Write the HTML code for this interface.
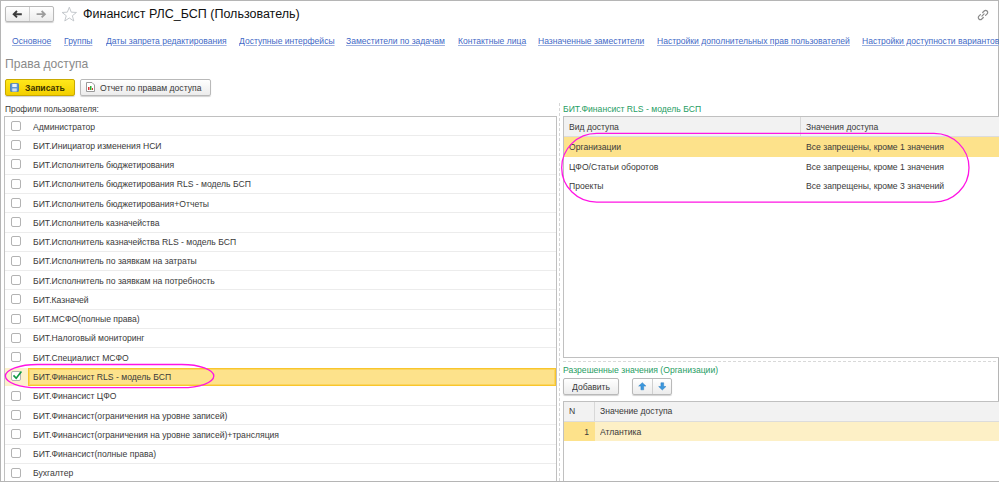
<!DOCTYPE html>
<html><head><meta charset="utf-8"><title>Финансист РЛС_БСП</title>
<style>
*{box-sizing:border-box;margin:0;padding:0}
html,body{width:999px;height:482px;overflow:hidden;background:#fff}
body{font-family:"Liberation Sans",sans-serif;font-size:9px;color:#3a3a3a;position:relative}
.abs{position:absolute;white-space:nowrap}
.t{position:absolute;white-space:nowrap;line-height:12px;height:12px;transform:scaleX(.9556);transform-origin:0 0}
.lnk{font-size:8.95px;color:#3f69c6;text-decoration:underline;text-decoration-color:#9fb1e0;text-underline-offset:1px}
.btn{position:absolute;border:1px solid #b9b9b9;border-radius:2px;background:linear-gradient(#ffffff,#ececec);box-shadow:0 1px 1px rgba(0,0,0,.18)}
.cb{position:absolute;left:11px;width:10px;height:10px;border:1px solid #b3b3b3;border-radius:2px;background:#fff}
.rl{position:absolute;left:5px;width:551px;height:1px;background:#ececec}
.g{color:#1f9d63}
</style></head><body>
<!-- outer frame -->
<div class="abs" style="left:0;top:0;width:999px;height:1px;background:#b5b5b5"></div>
<div class="abs" style="left:0;top:0;width:1px;height:482px;background:#b5b5b5"></div>
<div class="abs" style="left:998px;top:0;width:1px;height:482px;background:#b5b5b5"></div>
<div class="abs" style="left:0;top:481px;width:999px;height:1px;background:#b5b5b5;z-index:5"></div>

<div class="btn" style="left:5px;top:6px;width:49px;height:16px"></div>
<div class="abs" style="left:29px;top:7px;width:1px;height:14px;background:#d0d0d0"></div>
<svg class="abs" style="left:10px;top:8px" width="14" height="12" viewBox="0 0 14 12"><path d="M7 3 L3.7 6.2 L7 9.4 M4 6.2 H11.8" fill="none" stroke="#3c3c3c" stroke-width="1.9"/></svg>
<svg class="abs" style="left:34px;top:8px" width="14" height="12" viewBox="0 0 14 12"><path d="M7.6 3 L10.9 6.2 L7.6 9.4 M10.6 6.2 H2.6" fill="none" stroke="#9c9c9c" stroke-width="1.8"/></svg>
<svg class="abs" style="left:60.5px;top:5.8px" width="16.6" height="16.4" viewBox="0 0 16 16"><path d="M8 1.2 L9.9 6 L15 6.3 L11 9.5 L12.4 14.6 L8 11.7 L3.6 14.6 L5 9.5 L1 6.3 L6.1 6 Z" fill="#fff" stroke="#bfc3c8" stroke-width="0.9"/></svg>
<div class="t" style="left:83px;top:6px;font-size:13.08px;line-height:16px;height:16px;color:#111">Финансист РЛС_БСП (Пользователь)</div>
<svg class="abs" style="left:975.5px;top:7.5px" width="14" height="14" viewBox="0 0 13 13"><g fill="none" stroke="#8a8a8a" stroke-width="1.1" stroke-linecap="round"><path d="M5.5 7.5 L7.5 5.5"/><path d="M6.2 4.2 L7.6 2.8 a1.9 1.9 0 0 1 2.7 2.7 L8.9 6.9"/><path d="M6.8 8.8 L5.4 10.2 a1.9 1.9 0 0 1 -2.7 -2.7 L4.1 6.1"/></g></svg>

<div class="t lnk" style="left:11.5px;top:35px">Основное</div>
<div class="t lnk" style="left:63.5px;top:35px">Группы</div>
<div class="t lnk" style="left:105.5px;top:35px">Даты запрета редактирования</div>
<div class="t lnk" style="left:238.5px;top:35px">Доступные интерфейсы</div>
<div class="t lnk" style="left:345.5px;top:35px">Заместители по задачам</div>
<div class="t lnk" style="left:457.5px;top:35px">Контактные лица</div>
<div class="t lnk" style="left:537.5px;top:35px">Назначенные заместители</div>
<div class="t lnk" style="left:656.5px;top:35px">Настройки дополнительных прав пользователей</div>
<div class="t lnk" style="left:861.5px;top:35px">Настройки доступности вариантов</div>
<div class="t" style="left:5px;top:56px;font-size:12.66px;line-height:16px;height:16px;color:#8a8a8a">Права доступа</div>
<div class="btn" style="left:5px;top:79px;width:70px;height:17px;background:linear-gradient(#ffe81a,#f3cf00);border-color:#c9a900"></div>
<svg class="abs" style="left:10px;top:83px" width="9" height="9" viewBox="0 0 10 10"><rect x="0.5" y="0.5" width="9" height="9" rx="1" fill="#5b94d2" stroke="#4a7fbd"/><rect x="2.5" y="1" width="5" height="3.5" fill="#e8f0fa"/><rect x="2.5" y="6" width="5" height="3.5" fill="#cfdff2"/></svg>
<div class="t" style="left:25px;top:82px;font-weight:bold;color:#3b3300">Записать</div>
<div class="btn" style="left:80px;top:79px;width:131px;height:17px"></div>
<svg class="abs" style="left:86px;top:82px" width="9" height="10" viewBox="0 0 9 10"><path d="M0.5 0.5 H6 L8.5 3 V9.5 H0.5 Z" fill="#fff" stroke="#9a9a9a"/><rect x="2" y="5" width="1.5" height="3" fill="#d33"/><rect x="4" y="4" width="1.5" height="4" fill="#3a3"/><rect x="6" y="6" width="1" height="2" fill="#d33"/></svg>
<div class="t" style="left:100px;top:82px">Отчет по правам доступа</div>
<div class="t" style="left:5px;top:103px;font-size:8.74px">Профили пользователя:</div>

<div class="abs" style="left:4px;top:116px;width:553px;height:370px;border:1px solid #c0c0c0;background:#fff"></div>
<div class="cb" style="top:120.80px"></div>
<div class="t" style="left:33px;top:120.50px">Администратор</div>
<div class="rl" style="top:135.27px"></div>
<div class="cb" style="top:140.07px"></div>
<div class="t" style="left:33px;top:139.77px">БИТ.Инициатор изменения НСИ</div>
<div class="rl" style="top:154.54px"></div>
<div class="cb" style="top:159.34px"></div>
<div class="t" style="left:33px;top:159.04px">БИТ.Исполнитель бюджетирования</div>
<div class="rl" style="top:173.81px"></div>
<div class="cb" style="top:178.61px"></div>
<div class="t" style="left:33px;top:178.31px">БИТ.Исполнитель бюджетирования RLS - модель БСП</div>
<div class="rl" style="top:193.08px"></div>
<div class="cb" style="top:197.88px"></div>
<div class="t" style="left:33px;top:197.58px">БИТ.Исполнитель бюджетирования+Отчеты</div>
<div class="rl" style="top:212.35px"></div>
<div class="cb" style="top:217.15px"></div>
<div class="t" style="left:33px;top:216.85px">БИТ.Исполнитель казначейства</div>
<div class="rl" style="top:231.62px"></div>
<div class="cb" style="top:236.42px"></div>
<div class="t" style="left:33px;top:236.12px">БИТ.Исполнитель казначейства RLS - модель БСП</div>
<div class="rl" style="top:250.89px"></div>
<div class="cb" style="top:255.69px"></div>
<div class="t" style="left:33px;top:255.39px">БИТ.Исполнитель по заявкам на затраты</div>
<div class="rl" style="top:270.16px"></div>
<div class="cb" style="top:274.96px"></div>
<div class="t" style="left:33px;top:274.66px">БИТ.Исполнитель по заявкам на потребность</div>
<div class="rl" style="top:289.43px"></div>
<div class="cb" style="top:294.23px"></div>
<div class="t" style="left:33px;top:293.93px">БИТ.Казначей</div>
<div class="rl" style="top:308.70px"></div>
<div class="cb" style="top:313.50px"></div>
<div class="t" style="left:33px;top:313.20px">БИТ.МСФО(полные права)</div>
<div class="rl" style="top:327.97px"></div>
<div class="cb" style="top:332.77px"></div>
<div class="t" style="left:33px;top:332.47px">БИТ.Налоговый мониторинг</div>
<div class="rl" style="top:347.24px"></div>
<div class="cb" style="top:352.04px"></div>
<div class="t" style="left:33px;top:351.74px">БИТ.Специалист МСФО</div>
<div class="abs" style="left:5px;top:367.51px;width:23px;height:18.27px;background:#fdf1cb"></div>
<div class="abs" style="left:28px;top:367.51px;width:528px;height:18.27px;background:#fde28b;border:1px solid #f9c62c;box-shadow:inset 0 0 0 1px rgba(249,198,44,.45)"></div>
<div class="cb" style="top:371.31px"></div>
<svg class="abs" style="left:11px;top:369px" width="12" height="12" viewBox="0 0 12 12"><path d="M2.5 6.4 L5.2 9.3 L10.4 2.4" fill="none" stroke="#0f9a44" stroke-width="1.6"/></svg>
<div class="t" style="left:33px;top:371.01px">БИТ.Финансист RLS - модель БСП</div>
<div class="cb" style="top:390.58px"></div>
<div class="t" style="left:33px;top:390.28px">БИТ.Финансист ЦФО</div>
<div class="rl" style="top:405.05px"></div>
<div class="cb" style="top:409.85px"></div>
<div class="t" style="left:33px;top:409.55px">БИТ.Финансист(ограничения на уровне записей)</div>
<div class="rl" style="top:424.32px"></div>
<div class="cb" style="top:429.12px"></div>
<div class="t" style="left:33px;top:428.82px">БИТ.Финансист(ограничения на уровне записей)+трансляция</div>
<div class="rl" style="top:443.59px"></div>
<div class="cb" style="top:448.39px"></div>
<div class="t" style="left:33px;top:448.09px">БИТ.Финансист(полные права)</div>
<div class="rl" style="top:462.86px"></div>
<div class="cb" style="top:467.66px"></div>
<div class="t" style="left:33px;top:467.36px">Бухгалтер</div>
<div class="abs" style="left:559px;top:103px;width:1px;height:379px;background:repeating-linear-gradient(180deg,#d6d6d6 0,#d6d6d6 3px,transparent 3px,transparent 5px)"></div>
<div class="abs" style="left:563px;top:361px;width:435px;height:1px;background:repeating-linear-gradient(90deg,#d9d9d9 0,#d9d9d9 3px,transparent 3px,transparent 5px)"></div>
<div class="t g" style="left:563px;top:103px">БИТ.Финансист RLS - модель БСП</div>
<div class="abs" style="left:563px;top:116px;width:440px;height:242px;border:1px solid #c0c0c0;background:#fff"></div>
<div class="abs" style="left:564px;top:117px;width:435px;height:19.5px;background:#f2f2f2;border-bottom:1px solid #dcdcdc"></div>
<div class="abs" style="left:800px;top:117px;width:1px;height:19px;background:#d8d8d8"></div>
<div class="abs" style="left:564px;top:137px;width:435px;height:19.5px;background:#fde28b"></div>
<div class="t" style="left:569px;top:120.5px">Вид доступа</div>
<div class="t" style="left:806px;top:120.5px">Значения доступа</div>

<div class="t" style="left:569px;top:141.3px">Организации</div><div class="t" style="left:806px;top:141.3px">Все запрещены, кроме 1 значения</div>
<div class="t" style="left:569px;top:160.6px">ЦФО/Статьи оборотов</div><div class="t" style="left:806px;top:160.6px">Все запрещены, кроме 1 значения</div>
<div class="t" style="left:569px;top:179.9px">Проекты</div><div class="t" style="left:806px;top:179.9px">Все запрещены, кроме 3 значений</div>
<div class="t g" style="left:563px;top:364px">Разрешенные значения (Организации)</div>
<div class="btn" style="left:563px;top:378px;width:56px;height:17px"></div>
<div class="t" style="left:572px;top:381px">Добавить</div>
<div class="btn" style="left:632px;top:378px;width:40px;height:17px"></div>
<div class="abs" style="left:652px;top:379px;width:1px;height:15px;background:#cfcfcf"></div>
<svg class="abs" style="left:638px;top:382.3px" width="8.6" height="8.6" viewBox="0 0 10 11" preserveAspectRatio="none"><path d="M5 0.8 L9.2 5.2 H6.6 V10 H3.4 V5.2 H0.8 Z" fill="#3b97dd" stroke="#2a7cc0" stroke-width="0.6"/></svg>
<svg class="abs" style="left:657.8px;top:382.3px" width="8.6" height="8.6" viewBox="0 0 10 11" preserveAspectRatio="none"><path d="M5 10.2 L9.2 5.8 H6.6 V1 H3.4 V5.8 H0.8 Z" fill="#3b97dd" stroke="#2a7cc0" stroke-width="0.6"/></svg>
<div class="abs" style="left:563px;top:400.5px;width:440px;height:90px;border:1px solid #c0c0c0;background:#fff"></div>
<div class="abs" style="left:564px;top:401.5px;width:435px;height:20px;background:#f2f2f2;border-bottom:1px solid #dcdcdc"></div>
<div class="abs" style="left:594px;top:401.5px;width:1px;height:19.5px;background:#d8d8d8"></div>
<div class="abs" style="left:564px;top:421.5px;width:30.5px;height:19px;background:#fde28b"></div>
<div class="abs" style="left:594.5px;top:421.5px;width:404.5px;height:19px;background:#fdf0c6"></div>
<div class="t" style="left:569px;top:405px">N</div>
<div class="t" style="left:600px;top:405px">Значение доступа</div>
<div class="t" style="left:560px;width:29px;text-align:right;transform-origin:100% 0;top:426px">1</div>
<div class="t" style="left:600px;top:426px">Атлантика</div>

<svg class="abs" style="left:0;top:0;pointer-events:none" width="999" height="482" viewBox="0 0 999 482"><rect x="5.4" y="364.5" width="208.4" height="23.2" rx="32" ry="11.6" fill="none" stroke="#ff14e4" stroke-width="1.3"/>
<rect x="561.7" y="133.3" width="407.3" height="68.8" rx="35" ry="34.4" fill="none" stroke="#ff14e4" stroke-width="1.3"/></svg>

</body></html>
